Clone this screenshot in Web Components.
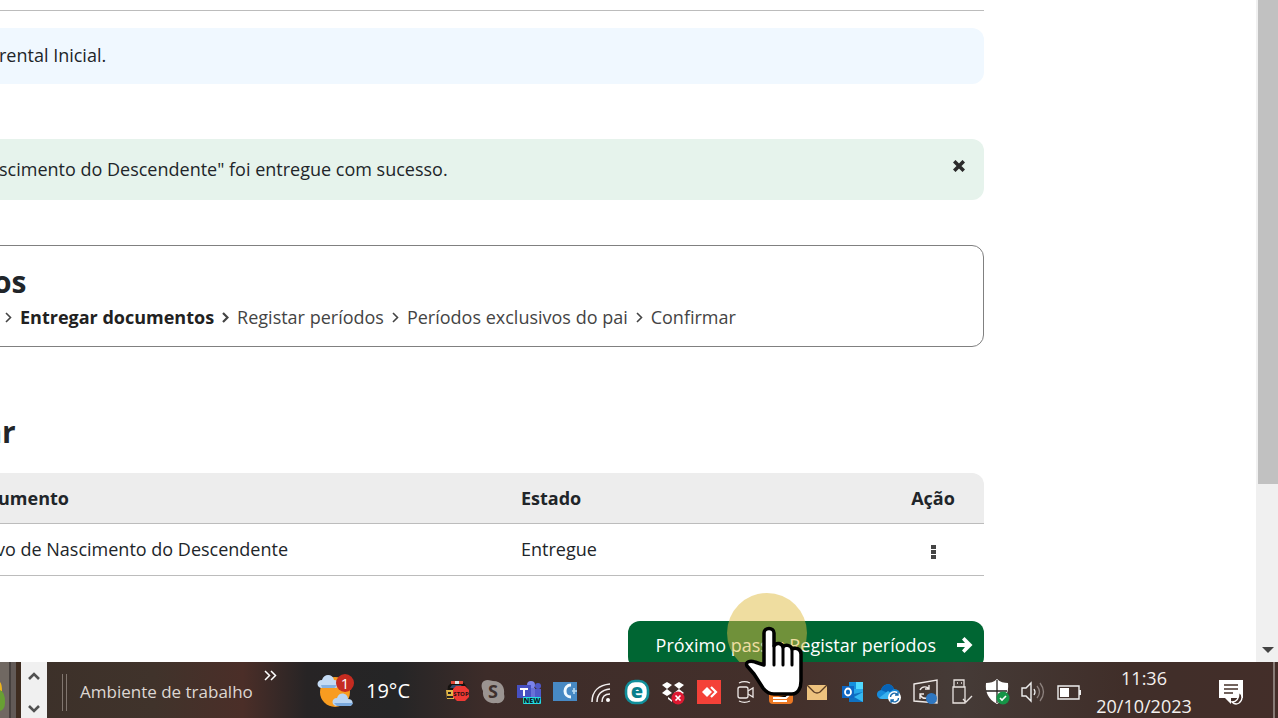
<!DOCTYPE html>
<html lang="pt">
<head>
<meta charset="utf-8">
<meta name="viewport" content="width=device-width, initial-scale=1">
<title>Entregar documentos</title>
<style>
  * { box-sizing: border-box; }
  body {
    margin: 0;
    height: 100vh;
    overflow: hidden;
    font-family: "Open Sans", "Noto Sans", sans-serif;
    font-size: 18px;
    color: #212529;
  }
</style>
</head>
<body>
<desktop-screen>
  <document-page slot="page"></document-page>
  <task-bar slot="bar"></task-bar>
</desktop-screen>

<script>
// small base class: every component only describes its template
class BaseView extends HTMLElement {
  connectedCallback() {
    if (!this.shadowRoot) {
      this.attachShadow({ mode: 'open' });
    }
    this.render();
  }

  render() {
    this.shadowRoot.innerHTML = `
      <style>
        *, :host { box-sizing: border-box; }
        button { font: inherit; border: 0; padding: 0; background: none; color: inherit; cursor: pointer; }
        svg { display: block; }
      </style>
      ${this.template()}
    `;
  }
}

// page on top, task bar at the bottom, pointer above both
class DesktopScreen extends BaseView {
  template() {
    return `
      <style>
        :host { display: flex; flex-direction: column; height: 100vh; position: relative; background: #fff; }
        .window { flex: 1; min-height: 0; display: flex; overflow: hidden; position: relative; }
        ::slotted(document-page) { flex: 1; min-width: 0; }
        .halo { position: absolute; left: 727px; top: 593px; width: 80px; height: 80px; border-radius: 50%; background: rgba(224, 187, 65, .5); pointer-events: none; }
        .hand { position: absolute; left: 740px; top: 622px; pointer-events: none; }
      </style>
      <div class="window">
        <slot name="page"></slot>
        <scroll-track></scroll-track>
        <div class="halo"></div>
      </div>
      <slot name="bar"></slot>
      <svg class="hand" width="68" height="78" viewBox="0 0 68 78" aria-hidden="true">
        <path d="M24 43V11c0-6 10-6 10 0v13c2-4 8-3 9 1 2-3 8-2 9 2 4-2 9 0 9 5v27c0 7-3 13-9 13H34c-5 0-8-2-11-6L14 52 7 44c-2-4 3-6 8-4z" fill="#fff" stroke="#000" stroke-width="3.5" stroke-linejoin="round"/>
        <path d="M34 24v19M43 26v17M52 28v15" fill="none" stroke="#000" stroke-width="3" stroke-linecap="round"/>
      </svg>
    `;
  }
}

class ScrollTrack extends BaseView {
  template() {
    return `
      <style>
        :host { display: flex; flex-direction: column; width: 22px; padding-left: 2px; background: #f0f0f0; }
        .thumb { height: 484px; background: #c1c1c1; }
        button { margin-top: auto; height: 24px; display: flex; align-items: center; justify-content: center; }
      </style>
      <div class="thumb"></div>
      <button aria-label="Descer"><svg width="12" height="7" viewBox="0 0 12 7"><path d="M0 0h12L6 6z" fill="#444"/></svg></button>
    `;
  }
}

class DocumentPage extends BaseView {
  template() {
    return `
      <style>
        :host { display: block; overflow: hidden; }
        main { margin: 0 272px 0 -16px; }
        hr { margin: 10px 0 17px; border: 0; border-top: 1px solid #bcbcbc; }
        h2 { margin: 70px 0 0; font-size: 30px; line-height: 30px; font-weight: 700; }
        table { width: 100%; margin-top: 26px; table-layout: fixed; border-spacing: 0; }
        th, td { height: 52px; padding: 0 14px 2px; text-align: left; line-height: 24px; border-bottom: 1px solid #bcbcbc; }
        th { height: 51px; padding: 0 14px; background: #ededed; font-weight: 700; }
        td:first-child { padding-left: 12px; }
        th:last-child { border-top-right-radius: 12px; }
        .name { width: 523px; }
        .action { width: 102px; padding-left: 0; padding-right: 0; text-align: center; }
        td button { width: 24px; height: 24px; vertical-align: middle; }
        td svg { margin: 6px auto 0; }
        .next { display: flex; justify-content: flex-end; margin-top: 45px; }
      </style>
      <main>
        <hr>
        <message-box kind="info">rental Inicial.</message-box>
        <message-box kind="success" closable>scimento do Descendente" foi entregue com sucesso.</message-box>
        <step-trail></step-trail>
        <h2>ar</h2>
        <table>
          <thead>
            <tr><th class="name">umento</th><th>Estado</th><th class="action">Ação</th></tr>
          </thead>
          <tbody>
            <tr>
              <td>vo de Nascimento do Descendente</td>
              <td>Entregue</td>
              <td class="action"><button aria-label="Mais ações"><svg width="5" height="15" viewBox="0 0 5 15"><path d="M0 0h5v4H0zM0 5h5v4H0zM0 10h5v4H0z" fill="#444"/></svg></button></td>
            </tr>
          </tbody>
        </table>
        <div class="next"><next-button>Próximo passo: Registar períodos</next-button></div>
      </main>
    `;
  }
}

class MessageBox extends BaseView {
  template() {
    // only closable messages get the cross
    const close = this.hasAttribute('closable')
      ? '<button aria-label="Fechar"><svg width="12" height="12" viewBox="0 0 12 12"><path d="M2.5 2.5l7 7M9.5 2.5l-7 7" stroke="#2b2b2b" stroke-width="3.6" stroke-linecap="square"/></svg></button>'
      : '';
    return `
      <style>
        :host { display: flex; justify-content: space-between; align-items: center; height: 56px; padding: 0 19px 2px 15px; border-radius: 12px; line-height: 24px; }
        :host([kind="info"]) { background: #f0f8ff; }
        :host([kind="success"]) { height: 61px; margin-top: 55px; background: #e6f3ec; }
        button { height: 20px; align-self: flex-start; margin-top: 17px; }
      </style>
      <span><slot></slot></span>${close}
    `;
  }
}

class StepTrail extends BaseView {
  template() {
    const arrow = '<svg width="7" height="12" viewBox="0 0 7 12"><path d="M1 2l4.500 4.500L1 11" fill="none" stroke="currentColor" stroke-width="1.6"/></svg>';
    const boldArrow = arrow.replace('stroke-width="1.6"', 'stroke-width="2.2"');
    const steps = ['Registar períodos', 'Períodos exclusivos do pai', 'Confirmar'];
    return `
      <style>
        :host { display: block; height: 102px; margin-top: 45px; padding: 21px 8px 0; border: 1px solid #808080; border-radius: 12px; }
        h2 { margin: 0; font-size: 30px; line-height: 30px; font-weight: 700; }
        ol { display: flex; align-items: center; gap: 8px; margin: 8px 0 0; padding: 0 0 0 12px; list-style: none; line-height: 24px; color: #444; white-space: nowrap; }
        li { display: flex; align-items: center; gap: 8px; }
        .current { font-weight: 700; color: #212121; }
      </style>
      <h2>os</h2>
      <ol>
        <li>${arrow}</li>
        <li class="current">Entregar documentos</li>
        ${steps.map((step, i) => `<li>${i === 0 ? boldArrow : arrow}<span>${step}</span></li>`).join('')}
      </ol>
    `;
  }
}

class NextButton extends BaseView {
  template() {
    return `
      <style>
        button { display: flex; align-items: center; gap: 20px; height: 48px; padding: 0 11px 0 28px; border-radius: 12px; background: #006633; color: #fff; line-height: 24px; white-space: nowrap; }
      </style>
      <button><slot></slot><svg width="17" height="18" viewBox="0 0 17 18"><path d="M1 7h8L6 3.500 8.500 1l8 8-8 8L6 14.500 9 11H1z" fill="#fff"/></svg></button>
    `;
  }
}

// tray drawings, all on a 36x36 cell
const icons = {
  police: '<path d="M9 12l3-3h13l4 6v6H8z" fill="#15120f"/><path d="M12 7h12v3H12z" fill="#df4939"/><path d="M16 7h4v3h-4z" fill="#dfe4e8"/><path d="M13 11h9l2 3H11z" fill="#33486b"/><path d="M7 16h8v9H8z" fill="#e1b647"/><path d="M9 18h3v2H9zM8 22h6v2H8z" fill="#222"/><path d="M17 12h9l4 4v7l-4 4h-8l-4-4v-8z" fill="#ed3934"/><text x="22" y="22" font-size="6" font-weight="700" text-anchor="middle" fill="#211">STOP</text>',
  skype: '<path d="M9 7c4-2 7 0 9 0 9 0 12 7 11 13 2 6-3 10-8 9-8 1-14-4-13-12-2-4-2-8 1-10z" fill="#9b9491"/><text x="18" y="24" font-size="18" font-weight="700" text-anchor="middle" fill="#3e302d">S</text>',
  teams: '<circle cx="20" cy="11" r="4" fill="#7b83eb"/><circle cx="27" cy="12" r="3" fill="#5059c9"/><path d="M14 14h10v10H14z" fill="#6971d8"/><path d="M24 15h6v9h-6z" fill="#5059c9"/><path d="M6 11h14v13H6z" fill="#4650c2"/><path d="M9 14h8v2h-3v6h-2v-6H9z" fill="#fff"/><rect x="12" y="23" width="18" height="7" rx="1" fill="#25dbe2"/><text x="21" y="29" font-size="7" font-weight="800" text-anchor="middle" fill="#082426">NEW</text>',
  capture: '<path d="M6 8h24v19H6z" fill="#4789c4"/><path d="M24 11c-8 0-8 12 0 12" fill="none" stroke="#f1faff" stroke-width="3"/><path d="M25 17h5M27 14v6" stroke="#b9daf2" stroke-width="1.6"/>',
  network: '<g fill="none" stroke="#f2eeee" stroke-width="1.5"><path d="M9 28C9 17 16 11 27 10"/><path d="M14 28c0-8 5-12 13-13"/><path d="M19 28c0-5 3-8 8-8"/></g><circle cx="25" cy="26" r="2" fill="#fff"/>',
  eset: '<rect x="7" y="7" width="22" height="22" rx="9" fill="#fff" stroke="#118f9b" stroke-width="2.6"/><text x="18" y="24" font-size="20" font-weight="800" text-anchor="middle" fill="#087f8c">e</text>',
  dropbox: '<path d="M12 8l5 3-5 4-5-4zM24 8l5 3-5 4-5-4zM12 15l5 4-5 3-5-3zM24 15l5 4-5 3-5-3zM13 23l4 3v2l-4-3z" fill="#fff"/><circle cx="23" cy="24" r="6.5" fill="#dd1931"/><path d="M20.500 21.500l5 5m0-5l-5 5" stroke="#fff" stroke-width="1.6"/>',
  anydesk: '<path d="M6 6h24v24H6z" fill="#f44138"/><path d="M16 13l5 5-5 5-5-5z" fill="#fff"/><path d="M20 13l5 5-5 5" fill="none" stroke="#fff" stroke-width="2.2"/>',
  camera: '<g fill="none" stroke="#eee8e6" stroke-width="1.3"><rect x="11" y="13" width="10" height="11" rx="2"/><path d="M21 17l5-3v9l-5-3M12 9c4-2 7-2 11 0M12 27c4 2 7 2 11 0"/></g>',
  java: '<rect x="6" y="8" width="24" height="22" rx="4" fill="#ec7823"/><path d="M10 24h13l3-3M10 27h14" stroke="#fff" stroke-width="2"/>',
  mail: '<path d="M8 11h20v15H8z" fill="#edc27e"/><path d="M8 11l7 7q3 2 6 0l7-7" fill="none" stroke="#593b24" stroke-width="1.4"/>',
  outlook: '<path d="M14 8h14v20H14z" fill="#28a8ea"/><path d="M21 8h7v7h-7z" fill="#50d9ff"/><path d="M14 8h7v7h-7z" fill="#1490df"/><path d="M14 21l14-3v10H14z" fill="#0f71c2"/><path d="M28 18v10l-9-5z" fill="#35b8f1"/><path d="M7 12h12v12H7z" fill="#0f67c4"/><ellipse cx="13" cy="18" rx="3" ry="3.500" fill="none" stroke="#fff" stroke-width="1.8"/>',
  cloud: '<path d="M11 25c-6 0-7-8-1-9 2-7 11-8 13-1 8 0 8 10 1 10z" fill="#168bdb"/><path d="M10 16c2-7 11-8 13-1l-6 4z" fill="#0763b6"/><path d="M8 24l9-7 10 7-4 1H11z" fill="#39b1ef"/><circle cx="23.500" cy="23.500" r="6.500" fill="#fff"/><path d="M19.500 23a4 4 0 0 1 7-2.500M27.500 24a4 4 0 0 1-7 2.500M27 18v3h-3M20 29v-3h3" fill="none" stroke="#1769ac" stroke-width="1.3"/>',
  update: '<path d="M7 10l23-4v23L7 27z" fill="none" stroke="#eee9e7" stroke-width="1.4"/><path d="M13 16c2-4 7-4 9-1M22 11v4h-4M13 25v-5h4M13 21c2 3 4 4 7 3" fill="none" stroke="#eee9e7" stroke-width="1.4"/><circle cx="24.500" cy="24.500" r="5.500" fill="#2e77c2"/>',
  usb: '<path d="M11 6h10v7H11zM10 13h12v16H10zM14 9h1m3 0h1" fill="none" stroke="#e9e3e0" stroke-width="1.3"/><path d="M20 25l3 3 6-6" fill="none" stroke="#e9e3e0" stroke-width="1.4"/>',
  shield: '<path d="M18 5c3 3 7 4 11 4 1 9-2 16-11 21C9 25 6 18 7 9c4 0 8-1 11-4z" fill="#fff"/><path d="M18 6v23M7 17h21" stroke="#272321" stroke-width="1.3"/><circle cx="24" cy="24" r="6.500" fill="#159447"/><path d="M21 24l2 2 4-4" fill="none" stroke="#fff" stroke-width="1.6"/>',
  sound: '<path d="M7 14h4l5-5v18l-5-5H7z" fill="none" stroke="#eee" stroke-width="1.4"/><path d="M19 15q2 3 0 6" fill="none" stroke="#eee" stroke-width="1.3"/><path d="M22 12q5 6 0 12M25 9q7 9 0 18" fill="none" stroke="#8d827e" stroke-width="1.3"/>',
  battery: '<path d="M7 12h21v13H7z" fill="none" stroke="#eee" stroke-width="1.4"/><path d="M9 14h9v9H9z" fill="#fff"/><path d="M28 16h2v5h-2" fill="#eee"/>'
};

class TrayIcon extends BaseView {
  template() {
    return `
      <style>
        :host { display: block; width: 36px; height: 36px; }
        text { font-family: "Open Sans", sans-serif; }
      </style>
      <svg width="36" height="36" viewBox="0 0 36 36" aria-hidden="true">${icons[this.getAttribute('name')]}</svg>
    `;
  }
}

class TaskBar extends BaseView {
  template() {
    return `
      <style>
        :host {
          display: flex; flex: none; height: 56px; color: #f4f0ee; white-space: nowrap;
          background: linear-gradient(90deg, #3b3029 0, #40332b 12%, #4b2e28 19%, #272425 24%, #252526 31%, #3d2c29 38%, #44302b 62%, #453b37 75%, #402e29 88%, #432e29 100%);
        }
        .running { width: 21px; background: linear-gradient(90deg, #706862 0 9px, #46403e 9px 11px, #625a57 11px 16px, #3e2c20 16px); }
        .scroller { width: 26px; background: #f0f0f0; display: flex; flex-direction: column; justify-content: space-between; align-items: center; padding: 9px 0 4px; }
        .grip { width: 5px; height: 37px; margin: 12px 13px 0 15px; border: solid #81766f; border-width: 0 1px; }
        .label { line-height: 24px; padding-top: 18px; color: #ddd7d3; width: 184px; font-size: 17px; }
        .more { align-self: flex-start; margin-top: 8px; }
        .weather { display: flex; align-items: center; gap: 11px; margin-left: 40px; padding-top: 2px; font-size: 20px; line-height: 24px; color: #fff; }
        .tray { display: flex; align-items: center; margin-left: auto; padding-top: 4px; }
        .clock { width: 114px; text-align: center; line-height: 28px; padding-top: 2px; }
        .notes { align-self: flex-start; margin: 17px 29px 0 17px; }
        .edge { width: 5px; border-left: 2px solid #877b76; }
      </style>
      <div class="running"><svg width="9" height="55" viewBox="0 0 9 55"><path d="M0 20q2 2 2 9H0z" fill="#efb51c"/><path d="M0 28q5 2 5 12 0 8-5 9z" fill="#68a033"/></svg></div>
      <div class="scroller">
        <button aria-label="Subir"><svg width="12" height="10" viewBox="0 0 12 10"><path d="M1 8l5-5 5 5" fill="none" stroke="#505050" stroke-width="2.6"/></svg></button>
        <button aria-label="Descer"><svg width="12" height="10" viewBox="0 0 12 10"><path d="M1 2l5 5 5-5" fill="none" stroke="#505050" stroke-width="2.6"/></svg></button>
      </div>
      <div class="grip"></div>
      <span class="label">Ambiente de trabalho</span>
      <button class="more" aria-label="Mostrar mais"><svg width="13" height="11" viewBox="0 0 13 11"><path d="M1 1l4.500 4.500L1 10M7 1l4.500 4.500L7 10" fill="none" stroke="#fff" stroke-width="1.5"/></svg></button>
      <div class="weather">
        <svg width="38" height="36" viewBox="0 0 38 36">
          <circle cx="18" cy="19" r="15" fill="#f89c20"/>
          <path d="M5 15c-6 0-6-8 0-8 2-7 11-6 12 0 6 0 6 8 1 8z" fill="#c4dbf4"/>
          <path d="M4 12h15q0 3-2 3H5z" fill="#86b1e0"/>
          <path d="M20 33c-6 0-6-8 0-8 2-7 11-5 11 1 6 0 6 7 1 7z" fill="#b9d5f2"/>
          <path d="M17 30h19q-1 3-4 3H20z" fill="#79a8dc"/>
          <circle cx="28" cy="10" r="9" fill="#c52b20"/>
          <text x="28" y="16" font-size="15" font-family="Open Sans, sans-serif" text-anchor="middle" fill="#fff">1</text>
        </svg>
        <span>19°C</span>
      </div>
      <div class="tray">
        ${Object.keys(icons).map((name) => `<tray-icon name="${name}"></tray-icon>`).join('')}
      </div>
      <div class="clock">11:36<br>20/10/2023</div>
      <button class="notes" aria-label="Notificações"><svg width="26" height="26" viewBox="0 0 26 26"><path d="M1 1h24v18H13v6l-6-6H1z" fill="#fff"/><path d="M6 6h14M6 10h14M6 14h9" stroke="#443029" stroke-width="1.5"/><path d="M21 13c4 3 4 8 0 11-3 2-6 0-7-1 5 0 7-4 7-10z" fill="#432e29" stroke="#fff" stroke-width="1.3"/></svg></button>
      <div class="edge"></div>
    `;
  }
}

customElements.define('scroll-track', ScrollTrack);
customElements.define('message-box', MessageBox);
customElements.define('step-trail', StepTrail);
customElements.define('next-button', NextButton);
customElements.define('tray-icon', TrayIcon);
customElements.define('document-page', DocumentPage);
customElements.define('task-bar', TaskBar);
customElements.define('desktop-screen', DesktopScreen);
</script>
</body>
</html>
